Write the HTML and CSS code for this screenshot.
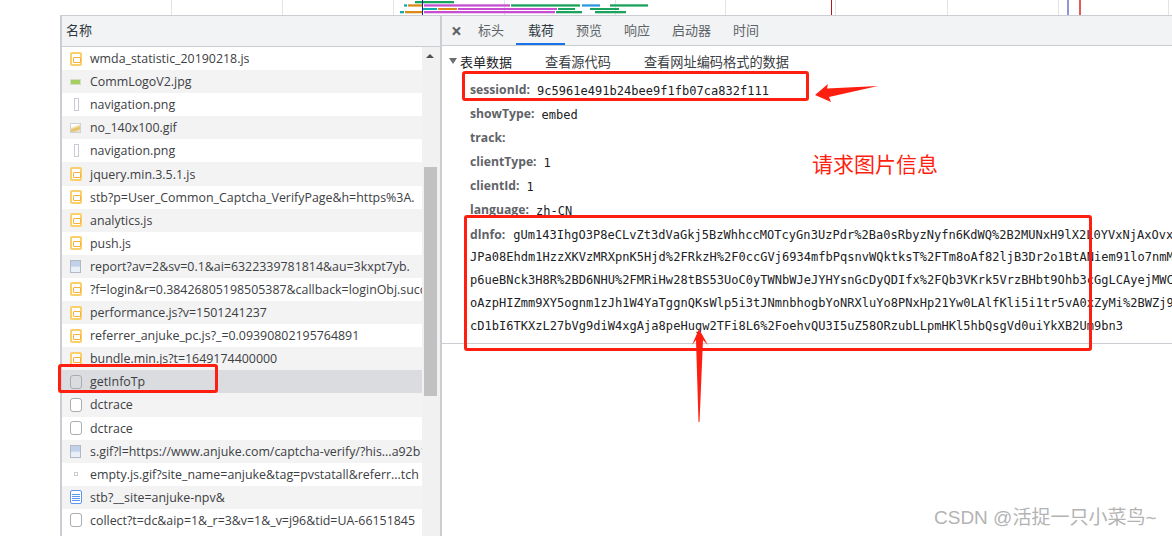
FILE: index.html
```html
<!DOCTYPE html>
<html lang="zh-CN">
<head>
<meta charset="utf-8">
<title>Network</title>
<link rel="stylesheet" href="styles.css">
</head>
<body>
<div class="page">
  <div class="timeline">
    <i class="grid g1"></i><i class="grid g2"></i><i class="grid g3"></i><i class="grid g4"></i><i class="grid g5"></i><i class="grid g6"></i><i class="grid g7"></i><i class="grid g8"></i><i class="grid g9"></i><i class="grid g10"></i>
    <svg class="bars" width="300" height="15" viewBox="0 0 300 15">
      <rect x="5" y="11" width="4" height="2.3" fill="#1aa"/><rect x="10" y="11" width="17" height="2.3" fill="#d98b1a"/><rect x="29" y="11" width="131" height="2.3" fill="#c54fd0"/><rect x="161" y="11" width="26" height="2.3" fill="#1aa35c"/><rect x="200" y="11" width="31" height="2.3" fill="#1aa35c"/>
      <rect x="27" y="8" width="15" height="2" fill="#1aa"/><rect x="43" y="8" width="19" height="2" fill="#d98b1a"/><rect x="63" y="8" width="99" height="2" fill="#c54fd0"/><rect x="163" y="8" width="17" height="2" fill="#1aa35c"/><rect x="195" y="8" width="29" height="2" fill="#1aa35c"/>
      <rect x="9" y="4.3" width="3" height="2.3" fill="#1aa"/><rect x="13" y="4.3" width="14" height="2.3" fill="#d98b1a"/><rect x="29" y="4.3" width="86" height="2.3" fill="#c54fd0"/><rect x="116" y="4.3" width="69" height="2.3" fill="#1aa35c"/><rect x="187" y="4.3" width="18" height="2.3" fill="#2a9be0"/><rect x="215" y="4.3" width="38" height="2.3" fill="#1aa35c"/>
      <rect x="20" y="1" width="39" height="2.3" fill="#1aa35c"/>
    </svg>
    <i class="mark m1"></i><i class="mark m2"></i><i class="mark m3"></i><i class="mark m4"></i>
  </div>
  <div class="main">
    <div class="gutter"></div>
    <section class="list">
      <div class="list-head">名称</div>
      <div class="list-body">
        <ul class="rows">
          <li class="row"><span class="ic js"></span><span class="nm">wmda_statistic_20190218.js</span></li>
          <li class="row"><span class="ic logo"></span><span class="nm">CommLogoV2.jpg</span></li>
          <li class="row"><span class="ic tall"></span><span class="nm">navigation.png</span></li>
          <li class="row"><span class="ic pic"></span><span class="nm">no_140x100.gif</span></li>
          <li class="row"><span class="ic tall"></span><span class="nm">navigation.png</span></li>
          <li class="row"><span class="ic js"></span><span class="nm">jquery.min.3.5.1.js</span></li>
          <li class="row"><span class="ic js"></span><span class="nm">stb?p=User_Common_Captcha_VerifyPage&amp;h=https%3A.</span></li>
          <li class="row"><span class="ic js"></span><span class="nm">analytics.js</span></li>
          <li class="row"><span class="ic js"></span><span class="nm">push.js</span></li>
          <li class="row"><span class="ic img"></span><span class="nm">report?av=2&amp;sv=0.1&amp;ai=6322339781814&amp;au=3kxpt7yb.</span></li>
          <li class="row"><span class="ic js"></span><span class="nm">?f=login&amp;r=0.38426805198505387&amp;callback=loginObj.success</span></li>
          <li class="row"><span class="ic js"></span><span class="nm">performance.js?v=1501241237</span></li>
          <li class="row"><span class="ic js"></span><span class="nm">referrer_anjuke_pc.js?_=0.09390802195764891</span></li>
          <li class="row"><span class="ic js"></span><span class="nm">bundle.min.js?t=1649174400000</span></li>
          <li class="row sel"><span class="ic doc"></span><span class="nm">getInfoTp</span></li>
          <li class="row"><span class="ic doc"></span><span class="nm">dctrace</span></li>
          <li class="row"><span class="ic doc"></span><span class="nm">dctrace</span></li>
          <li class="row"><span class="ic img"></span><span class="nm">s.gif?l=https://www.anjuke.com/captcha-verify/?his...a92b1c</span></li>
          <li class="row"><span class="ic dot"></span><span class="nm">empty.js.gif?site_name=anjuke&amp;tag=pvstatall&amp;referr...tch</span></li>
          <li class="row"><span class="ic blue"><b></b><b></b><b></b><b></b></span><span class="nm">stb?__site=anjuke-npv&amp;</span></li>
          <li class="row"><span class="ic doc"></span><span class="nm">collect?t=dc&amp;aip=1&amp;_r=3&amp;v=1&amp;_v=j96&amp;tid=UA-66151845</span></li>
        </ul>
        <div class="scroll"><span class="up"></span><span class="thumb"></span></div>
      </div>
    </section>
    <section class="detail">
      <nav class="tabs">
        <span class="close">×</span>
        <span class="tab">标头</span>
        <span class="tab on">载荷</span>
        <span class="tab">预览</span>
        <span class="tab">响应</span>
        <span class="tab">启动器</span>
        <span class="tab">时间</span>
      </nav>
      <div class="payload">
        <div class="form-head"><span class="tri"></span><span class="title">表单数据</span><span class="act">查看源代码</span><span class="act">查看网址编码格式的数据</span></div>
        <div class="kv"><span class="k">sessionId:</span><span class="v">9c5961e491b24bee9f1fb07ca832f111</span></div>
        <div class="kv"><span class="k">showType:</span><span class="v">embed</span></div>
        <div class="kv"><span class="k">track:</span><span class="v"></span></div>
        <div class="kv"><span class="k">clientType:</span><span class="v">1</span></div>
        <div class="kv"><span class="k">clientId:</span><span class="v">1</span></div>
        <div class="kv"><span class="k">language:</span><span class="v">zh-CN</span></div>
        <div class="kv long"><span class="k">dlnfo:</span><span class="v">gUm143IhgO3P8eCLvZt3dVaGkj5BzWhhccMOTcyGn3UzPdr%2Ba0sRbyzNyfn6KdWQ%2B2MUNxH9lX2L0YVxNjAxOvxQ</span></div>
        <div class="line">JPa08Ehdm1HzzXKVzMRXpnK5Hjd%2FRkzH%2F0ccGVj6934mfbPqsnvWQktksT%2FTm8oAf82ljB3Dr2o1BtANiem91lo7nmM</div>
        <div class="line">p6ueBNck3H8R%2BD6NHU%2FMRiHw28tBS53UoC0yTWNbWJeJYHYsnGcDyQDIfx%2FQb3VKrk5VrzBHbt9Ohb3cGgLCAyejMWC</div>
        <div class="line">oAzpHIZmm9XY5ognm1zJh1W4YaTggnQKsWlp5i3tJNmnbhogbYoNRXluYo8PNxHp21Yw0LAlfKli5i1tr5vA0xZyMi%2BWZj9</div>
        <div class="line">cD1bI6TKXzL27bVg9diW4xgAja8peHugw2TFi8L6%2FoehvQU3I5uZ58ORzubLLpmHKl5hbQsgVd0uiYkXB2Um9bn3</div>
        <div class="rule"></div>
      </div>
    </section>
  </div>
  <div class="box box-row"></div>
  <div class="box box-session"></div>
  <div class="box box-info"></div>
  <svg class="arrow arrow-left" width="66" height="20" viewBox="0 0 66 20"><path d="M1 12 L14 1 L13 5.5 L64 3 L15 14 L17 19 Z" fill="#ff1f10"/></svg>
  <svg class="arrow arrow-up" width="19" height="94" viewBox="0 0 19 94"><path d="M9 0 L18 16 L13 11 L9.5 93 L8.5 93 L6 11 L2 16 Z" fill="#ff1f10"/></svg>
  <div class="note">请求图片信息</div>
  <div class="mark-text">CSDN @活捉一只小菜鸟~</div>
</div>
</body>
</html>
```
FILE: styles.css
```css
* { box-sizing: border-box; }
html, body { margin: 0; padding: 0; background: #fff; }
body { font-family: "Open Sans", "Noto Sans CJK SC", sans-serif; font-size: 12px; color: #303942; }
.page { position: relative; width: 1172px; height: 536px; overflow: hidden; }

.timeline { position: relative; height: 16px; margin-left: 60px; border-bottom: 1px solid #cacdd1; }
.grid { position: absolute; top: 0; bottom: 0; width: 1px; background: #e3e3e3; }
.g1 { left: 111px; } .g2 { left: 222px; } .g3 { left: 333px; } .g4 { left: 444px; } .g5 { left: 555px; }
.g6 { left: 665px; } .g7 { left: 775px; } .g8 { left: 887px; } .g9 { left: 998px; } .g10 { left: 1108px; }
.bars { position: absolute; left: 335px; top: 0; }
.mark { position: absolute; top: 0; bottom: 0; }
.m1 { left: 362px; width: 1px; background: #1a1fa8; }
.m2 { left: 771px; width: 1px; background: #b5161b; }
.m3 { left: 1007px; width: 2px; background: #8f95dc; }
.m4 { left: 1019px; width: 2px; background: #e05a5a; }

.main { display: flex; height: 520px; }
.gutter { width: 60px; flex: none; }
.list { width: 380px; flex: none; border-left: 2px solid #cacdd1; display: flex; flex-direction: column; }
.list-head { height: 31px; flex: none; padding: 0 4px; line-height: 29px; font-size: 13px; color: #303942; background: #f1f3f4; border-bottom: 1px solid #cacdd1; }
.list-body { flex: 1; display: flex; min-height: 0; }
.rows { list-style: none; margin: 0; padding: 0; width: 360px; flex: none; }
.row { display: flex; align-items: center; height: 23.1px; padding-left: 8px; background: #fff; overflow: hidden; }
.row:nth-child(even) { background: #f3f3f3; }
.row.sel { background: #dadce0; }
.nm { margin-left: 8px; white-space: nowrap; font-size: 12.4px; color: #3c4043; }
.ic { position: relative; flex: none; width: 12px; height: 14px; display: block; }
.js { background: #fff; border: 2px solid #fbcf6c; border-radius: 2px; }
.js::after { content: ""; position: absolute; left: 1px; top: 3px; width: 6px; height: 4px; border: 1px solid #f3b33a; background: #fff; border-radius: 1px; }
.doc { background: #fff; border: 1.5px solid #a9acb1; border-radius: 3px; }
.sel .doc { background: #dadce0; }
.tall { width: 5px; margin: 0 3px 0 4px; height: 13px; border: 1px solid #c9ccd0; }
.logo { height: 6px; background: #a5cf62; border: 1px solid #d5dcc8; width: 11px; margin-right: 1px; }
.pic { height: 10px; width: 11px; margin-right: 1px; border: 1px solid #cfd2d5; background: linear-gradient(160deg, #fff 25%, #e3bf5a 60%, #eee 100%); }
.img { width: 11px; height: 13px; margin-right: 1px; border: 1px solid #b3b9c4; background: linear-gradient(#c2d1ea 45%, #eaf0f9 60%); }
.dot { width: 4px; height: 4px; margin: 0 4px; border: 1px solid #c9ccd0; }
.blue { display: flex; flex-direction: column; justify-content: center; gap: 1px; padding: 0 1px; background: #fff; border: 1px solid #5c95f2; border-radius: 2px; }
.blue b { display: block; height: 1px; background: #5c95f2; }

.scroll { position: relative; width: 18px; flex: none; background: #f1f1f1; }
.up { position: absolute; left: 4px; top: 7px; border-left: 4px solid transparent; border-right: 4px solid transparent; border-bottom: 4px solid #505050; }
.thumb { position: absolute; left: 2px; top: 120px; width: 13px; height: 229px; background: #c1c1c1; }

.detail { flex: 1; min-width: 0; border-left: 2px solid #cacdd1; overflow: hidden; }
.tabs { height: 30px; display: flex; align-items: center; padding-left: 9px; background: #f1f3f4; border-bottom: 1px solid #cacdd1; font-size: 13px; color: #5f6368; }
.close { width: 27px; font-size: 19px; font-weight: 700; line-height: 26px; color: #5f6368; }
.tab { height: 29px; line-height: 29px; padding: 0 10px 0 0; margin-right: 12px; position: relative; }
.tab.on { color: #303942; margin-left: 2px; }
.tab.on::after { content: ""; position: absolute; left: -12px; bottom: 0; height: 2px; background: #1a73e8; width: 49px; }
.payload { position: relative; padding-top: 6px; }
.form-head { display: flex; align-items: center; height: 18px; padding-left: 7px; font-size: 13px; color: #303942; }
.tri { width: 0; height: 0; margin-right: 3px; border-left: 4px solid transparent; border-right: 4px solid transparent; border-top: 6px solid #6e6e6e; }
.title { font-weight: 400; color: #202124; width: 85px; }
.act { color: #3c4043; margin-right: 33px; font-size: 13.2px; }
.kv { display: flex; height: 24px; align-items: center; padding-left: 28px; white-space: nowrap; }
.form-head + .kv { margin-top: 7px; }
.k { font-weight: 700; color: #5f6368; font-size: 12.2px; margin-right: 7px; }
.v, .line { font-family: "DejaVu Sans Mono", "Liberation Mono", monospace; font-size: 12px; letter-spacing: 0.03px; color: #202124; }
.v { padding-top: 4px; }
.kv.long { height: 24px; margin-top: 1px; }
.long .k { margin-right: 8px; }
.long .v { padding-top: 1px; }
.line { height: 23px; line-height: 23px; padding-left: 28px; white-space: nowrap; }
.rule { height: 1px; margin-top: 5px; background: #cacdd1; }

.box { position: absolute; border: 3px solid #ff1f10; border-radius: 3px; }
.box-row { left: 58px; top: 364px; width: 160px; height: 29px; }
.box-session { left: 462px; top: 71px; width: 347px; height: 30px; }
.box-info { left: 464px; top: 215px; width: 628px; height: 136px; }
.arrow { position: absolute; }
.arrow-left { left: 814px; top: 83px; }
.arrow-up { left: 690px; top: 329px; }
.note { position: absolute; left: 812px; top: 148px; font-size: 21px; line-height: 30px; color: #ff1f10; font-family: "Noto Sans CJK SC", sans-serif; }
.mark-text { position: absolute; left: 934px; top: 505px; font-size: 19px; line-height: 26px; color: #b3b3b3; font-family: "Liberation Sans", "Noto Sans CJK SC", sans-serif; white-space: nowrap; }
```
